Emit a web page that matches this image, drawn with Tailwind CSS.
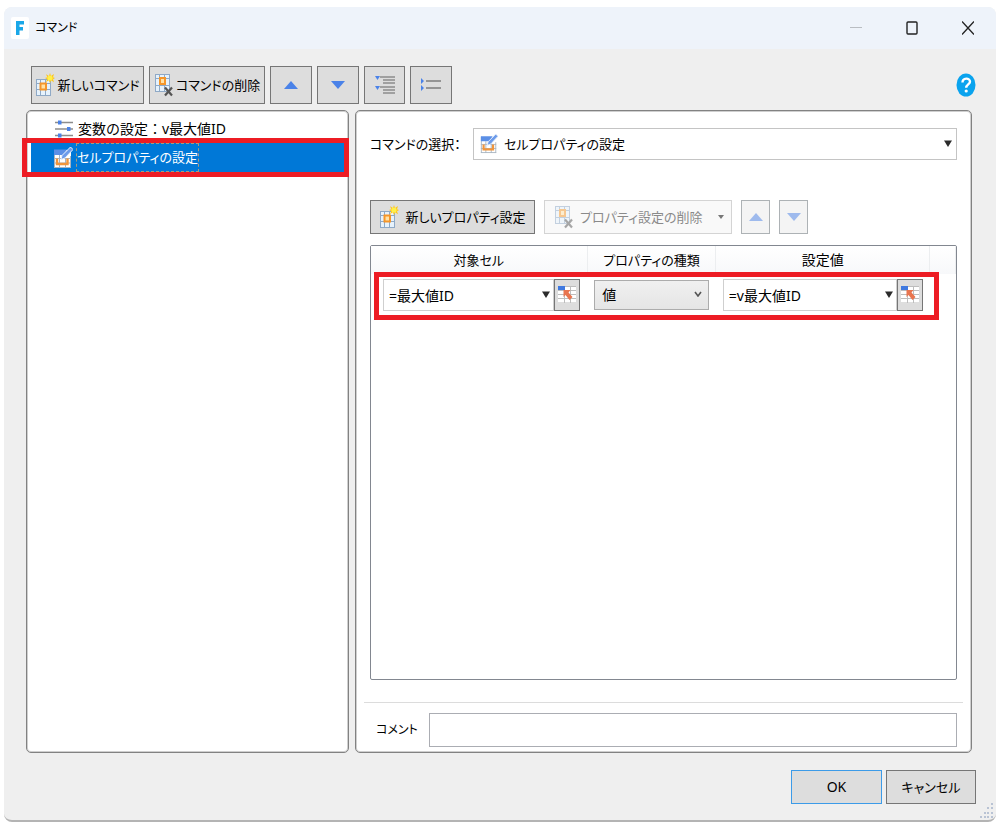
<!DOCTYPE html>
<html lang="ja">
<head>
  <meta charset="UTF-8" />
  <meta name="viewport" content="width=device-width, initial-scale=1.0"/>
  <title>コマンド</title>
  <script src="https://cdn.jsdelivr.net/npm/@tailwindcss/browser@4"></script>
</head>
<body class="bg-white text-black text-[13px] leading-5 font-['Noto_Sans','Noto_Sans_CJK_JP',sans-serif] [font-feature-settings:'palt']">

  <!-- アイコン定義 -->
  <svg class="hidden">
    <symbol id="icon-new" viewBox="0 0 20 24">
      <rect x="1" y="6" width="15" height="17" fill="#8fa9c6"/>
      <path d="M2 7h3v3H2zM6 7h4v3H6zM11 7h4v3h-4zM2 11h3v5H2zM12 11h3v5h-3zM2 17h3v5H2zM6 17h4v5H6zM11 17h4v5h-4z" fill="#e6f2fc"/>
      <rect x="5.500" y="10.500" width="5.500" height="6" fill="#ffe2a6" stroke="#f5962a" stroke-width="2"/>
      <path d="M15 0l1 3 3-2-1 3.200L20 5l-2 1.200 1 3-3-2-1 3-1.200-3-3 2 1.400-3L10 5l2.400-.8-1.400-3 3 1.800z" fill="#ffc61a"/>
      <circle cx="15" cy="5" r="2.600" fill="#fff04a"/>
    </symbol>
    <symbol id="icon-delete" viewBox="0 0 20 24">
      <rect x="1" y="1" width="15" height="18" fill="#8fa9c6"/>
      <path d="M2 2h3v3H2zM6 2h4v3H6zM11 2h4v3h-4zM2 6h3v6H2zM12 6h3v6h-3zM2 13h3v5H2zM6 13h4v5H6zM11 13h4v5h-4z" fill="#e6f2fc"/>
      <rect x="6" y="5" width="5" height="6" fill="#ffe2a6" stroke="#f5962a" stroke-width="2"/>
      <path d="M11 14.500l7 8M18 14.500l-7 8" stroke="#555" stroke-width="2.200"/>
    </symbol>
    <symbol id="icon-property" viewBox="0 0 20 22">
      <rect x="1" y="3" width="17" height="18" fill="#fff"/>
      <path d="M1 20.500h17M1.500 3v18M17.500 9v12M6.500 8v13M12.500 8v13M1 11.500h17M1 16h17" stroke="#a9b4c1" fill="none"/>
      <path d="M1 2.500h13L11 8H1z" fill="#5b8fe6"/>
      <path d="M4 11.500v5.500h10.500v-5.500" fill="none" stroke="#f0953c" stroke-width="2.400"/>
      <path d="M8 12.500l1-4L17.500 0l2.500 2.500L12 11z" fill="#6d9bea" stroke="#e9f0fc"/>
    </symbol>
    <symbol id="icon-variable" viewBox="0 0 18 18">
      <path d="M0 2.500h18M0 9h18M0 15.500h18" stroke="#8d8d8d" stroke-width="1.600"/>
      <path d="M3 .5h3.500v4H3zM12 7h3.500v4H12zM3 13.500h3.500v4H3z" fill="#4a82e8"/>
    </symbol>
    <symbol id="icon-cell" viewBox="0 0 18 18">
      <path d="M0 0h18v18H0z" fill="#fff"/>
      <path d="M0 4.500h18M0 8.500h18M0 12.500h18M0 17h18M6.500 0v17M12.500 0v17M6 .5h12" stroke="#bdbdbd" fill="none"/>
      <path d="M0 0h7v4H0z" fill="#3f79e0"/>
      <path d="M5.500 4h7l-2 2.500 4 4.500-3 3-4-5-2 2z" fill="#e8754f"/>
    </symbol>
    <symbol id="icon-up" viewBox="0 0 16 10"><path d="M8 1l7 8H1z" fill="#4a82e8"/></symbol>
    <symbol id="icon-down" viewBox="0 0 16 10"><path d="M8 9l7-8H1z" fill="#4a82e8"/></symbol>
    <symbol id="icon-caret" viewBox="0 0 8 8"><path d="M0 .5h8L4 7z" fill="#2b2b2b"/></symbol>
  </svg>

  <main class="min-h-screen px-1 py-[7px] flex flex-col">
    <div class="grow flex flex-col bg-[#efefef] rounded-lg border-b-2 border-[#b4b4b4] relative">

      <!-- タイトルバー -->
      <header class="h-[42px] bg-[#eef3fa] rounded-t-lg flex items-center pl-[7px]">
        <svg class="w-[18px] h-[22px]" viewBox="0 0 18 22">
          <rect width="18" height="22" rx="2" fill="#fff"/>
          <path d="M5 4h8v3.500H8.500V10H12v3.500H8.500V18H5z" fill="#1aa7e8"/>
        </svg>
        <h1 class="ml-1.5 grow text-xs">コマンド</h1>
        <button aria-label="最小化" class="w-14 flex justify-center"><svg class="w-3 h-3" viewBox="0 0 12 12"><path d="M0 5.500h12" stroke="#b9bdc2"/></svg></button>
        <button aria-label="最大化" class="w-14 flex justify-center"><svg class="w-3 h-3.5" viewBox="0 0 12 14"><rect x="1" y="1" width="10" height="12" rx="1" fill="none" stroke="#222" stroke-width="1.400"/></svg></button>
        <button aria-label="閉じる" class="w-14 flex justify-center"><svg class="w-3 h-3.5" viewBox="0 0 12 14"><path d="M0 .5l12 13M12 .5l-12 13" stroke="#222" stroke-width="1.300"/></svg></button>
      </header>

      <!-- ツールバー -->
      <div class="flex items-center gap-[5px] pl-[27px] pr-5 pt-[17px] pb-1.5">
        <button class="h-[38px] w-[113px] border border-[#767676] bg-[#dddddd] flex items-center justify-center gap-0.5 whitespace-nowrap">
          <svg class="w-5 h-6 shrink-0"><use href="#icon-new"/></svg>新しいコマンド
        </button>
        <button class="h-[38px] w-[116px] border border-[#767676] bg-[#dddddd] flex items-center justify-center gap-0.5 whitespace-nowrap">
          <svg class="w-5 h-6 shrink-0"><use href="#icon-delete"/></svg>コマンドの削除
        </button>
        <button aria-label="上へ" class="h-[38px] w-[42px] border border-[#767676] bg-[#dddddd] flex items-center justify-center"><svg class="w-4 h-2.5"><use href="#icon-up"/></svg></button>
        <button aria-label="下へ" class="h-[38px] w-[42px] border border-[#767676] bg-[#dddddd] flex items-center justify-center"><svg class="w-4 h-2.5"><use href="#icon-down"/></svg></button>
        <button aria-label="すべて展開" class="h-[38px] w-[41px] border border-[#767676] bg-[#dddddd] flex items-center justify-center">
          <svg class="w-5 h-[18px]" viewBox="0 0 20 18">
            <path d="M5 1h15M8 4h12M8 7h12M5 11h15M8 14h12M8 17h12" stroke="#8c8c8c" stroke-width="1.700"/>
            <path d="M0 0h5L2.500 4zM0 10h5l-2.500 4z" fill="#4a82e8"/>
          </svg>
        </button>
        <button aria-label="すべて折りたたむ" class="h-[38px] w-[42px] border border-[#767676] bg-[#dddddd] flex items-center justify-center">
          <svg class="w-5 h-3.5" viewBox="0 0 20 14">
            <path d="M5 3h15M5 10h15" stroke="#959595" stroke-width="2"/>
            <path d="M0 0l3 3-3 3zM0 7l3 3-3 3z" fill="#4a82e8"/>
          </svg>
        </button>
        <a href="#" aria-label="ヘルプ" class="ml-auto">
          <svg class="w-5 h-6" viewBox="0 0 20 24">
            <ellipse cx="10" cy="12" rx="9.500" ry="11.500" fill="#0aa3ee"/>
            <path d="M6.500 9.500c0-5 7.500-5 7.500-.8 0 2.600-3.800 2.900-3.800 6" fill="none" stroke="#fff" stroke-width="2.400"/>
            <circle cx="10.200" cy="18" r="1.600" fill="#fff"/>
          </svg>
        </a>
      </div>

      <div class="grow flex gap-1.5 pl-[22px] pr-6">
        <!-- コマンド一覧 -->
        <section class="w-[323px] shrink-0 bg-white border border-[#828282] inset-ring inset-ring-[#cfcfcf] rounded-[5px] px-1 pt-1">
          <ul>
            <li class="h-7 pl-6 flex items-center gap-[5px] text-[14px] [font-feature-settings:normal]">
              <svg class="w-[18px] h-[18px]"><use href="#icon-variable"/></svg>変数の設定：v最大値ID
            </li>
            <li class="relative h-[29px] pl-[22px] flex items-center gap-[3px] bg-[#0078d7] text-white">
              <svg class="w-5 h-[22px]"><use href="#icon-property"/></svg>
              <span class="border border-dashed border-[#a89a7c] h-[29px] leading-[27px]">セルプロパティの設定</span>
              <div class="absolute -top-[5px] -bottom-[5px] -left-[9px] -right-[5px] border-[5px] border-[#ed1c24]"></div>
            </li>
          </ul>
        </section>

        <!-- コマンド詳細 -->
        <section class="grow min-w-0 flex flex-col bg-white border border-[#828282] inset-ring inset-ring-[#cfcfcf] rounded-[5px] px-3.5 pt-[17px] pb-[5px]">
          <div class="flex items-center">
            <label for="command" class="w-[103px] whitespace-nowrap">コマンドの選択：</label>
            <div class="relative grow">
              <svg class="absolute left-[7px] top-1.5 w-[18px] h-5 pointer-events-none"><use href="#icon-property"/></svg>
              <select id="command" class="appearance-none w-full h-8 pl-[30px] border border-[#c4c4c4] bg-white rounded-none block">
                <option>セルプロパティの設定</option>
                <option>変数の設定</option>
              </select>
              <svg class="absolute right-[5px] top-3 w-2 h-2 pointer-events-none"><use href="#icon-caret"/></svg>
            </div>
          </div>

          <div class="flex gap-[9px] mt-10">
            <button class="h-[34px] w-[165px] border border-[#767676] bg-[#dddddd] flex items-center justify-center gap-1.5 whitespace-nowrap">
              <svg class="w-5 h-6 shrink-0"><use href="#icon-new"/></svg>新しいプロパティ設定
            </button>
            <button disabled class="h-[34px] w-[188px] border border-[#d4d4d4] bg-[#f9f9f9] text-[#8a8a8a] flex items-center pl-[9px] gap-1.5 whitespace-nowrap">
              <svg class="w-5 h-6 shrink-0 opacity-50"><use href="#icon-delete"/></svg>プロパティ設定の削除
              <svg class="w-1.5 h-1 ml-auto mr-[7px]" viewBox="0 0 6 4"><path d="M0 0h6L3 4z" fill="#777"/></svg>
            </button>
            <button disabled aria-label="設定を上へ" class="h-[34px] w-[29px] border border-[#adb2b5] bg-[#f4f4f4] flex items-center justify-center"><svg class="w-4 h-2.5 opacity-50"><use href="#icon-up"/></svg></button>
            <button disabled aria-label="設定を下へ" class="h-[34px] w-[29px] border border-[#adb2b5] bg-[#f4f4f4] flex items-center justify-center"><svg class="w-4 h-2.5 opacity-50"><use href="#icon-down"/></svg></button>
          </div>

          <!-- プロパティ設定の表 -->
          <div class="grow mt-[11px] border border-[#828790] rounded-xs relative">
            <table class="w-full table-fixed">
              <thead>
                <tr class="h-7 bg-linear-to-b from-white to-[#f7f8fa]">
                  <th class="w-[37%] font-normal border-r border-[#eceef0]">対象セル</th>
                  <th class="w-[22%] font-normal border-r border-[#eceef0]">プロパティの種類</th>
                  <th class="font-normal border-r border-[#eceef0] text-[14px]">設定値</th>
                  <th class="w-[26px] border-r border-[#eceef0]"></th>
                </tr>
              </thead>
              <tbody class="text-[14px]">
                <tr class="h-[41px]">
                  <td class="pl-3 pr-[7px]">
                    <div class="flex h-8">
                      <div class="relative grow">
                        <input aria-label="対象セル" value="=最大値ID" class="w-full h-8 pl-[5px] pr-5 border border-[#cfcfcf]">
                        <svg class="absolute right-1 top-3 w-2 h-2 pointer-events-none"><use href="#icon-caret"/></svg>
                      </div>
                      <button aria-label="対象セルの選択" class="w-[26px] shrink-0 border border-[#767676] bg-[#dddddd] flex items-center justify-center"><svg class="w-[18px] h-[18px]"><use href="#icon-cell"/></svg></button>
                    </div>
                  </td>
                  <td class="px-[7px]">
                    <div class="relative">
                      <select aria-label="プロパティの種類" class="appearance-none w-full h-[30px] pl-[7px] border border-[#acacac] bg-linear-to-b from-[#f0f0f0] to-[#e5e5e5] rounded-none block">
                        <option>値</option>
                        <option>背景色</option>
                      </select>
                      <svg class="absolute right-[7px] top-[11px] w-2 h-1.5 pointer-events-none" viewBox="0 0 8 6"><path d="M1 1l3 4 3-4" fill="none" stroke="#555" stroke-width="1.600"/></svg>
                    </div>
                  </td>
                  <td class="px-[7px]">
                    <div class="flex h-8">
                      <div class="relative grow">
                        <input aria-label="設定値" value="=v最大値ID" class="w-full h-8 pl-[5px] pr-5 border border-[#cfcfcf]">
                        <svg class="absolute right-1 top-3 w-2 h-2 pointer-events-none"><use href="#icon-caret"/></svg>
                      </div>
                      <button aria-label="設定値のセル選択" class="w-[26px] shrink-0 border border-[#767676] bg-[#dddddd] flex items-center justify-center"><svg class="w-[18px] h-[18px]"><use href="#icon-cell"/></svg></button>
                    </div>
                  </td>
                  <td></td>
                </tr>
              </tbody>
            </table>
            <div class="absolute top-[26px] left-[3px] right-[17px] h-12 border-[5px] border-[#ed1c24] pointer-events-none"></div>
          </div>

          <div class="mt-[22px] -mx-1.5 border-t border-[#dcdcdc]"></div>
          <div class="mt-2.5 flex items-center">
            <label for="comment" class="w-[59px] pl-1.5 whitespace-nowrap text-xs">コメント</label>
            <input id="comment" type="text" class="grow h-[34px] px-2 border border-[#abadb3] bg-white">
          </div>
        </section>
      </div>

      <!-- フッター -->
      <footer class="flex justify-end gap-1 pt-[17px] pb-4 pr-5">
        <button class="h-[34px] w-[91px] border border-[#3c9be8] bg-[#dddddd] text-[14px]">OK</button>
        <button class="h-[34px] w-[90px] border border-[#767676] bg-[#dddddd]">キャンセル</button>
      </footer>
      <svg class="absolute right-0 bottom-0 w-4 h-[18px]" viewBox="0 0 16 18">
        <path d="M11 1h2v2h-2zM7 5h2v2H7zM11 5h2v2h-2zM4 10h2v2H4zM7 10h2v2H7zM11 10h2v2h-2zM0 14h2v2H0zM4 14h2v2H4zM7 14h2v2H7zM11 14h2v2h-2z" fill="#b9c3d4"/>
      </svg>
    </div>
  </main>

</body>
</html>
